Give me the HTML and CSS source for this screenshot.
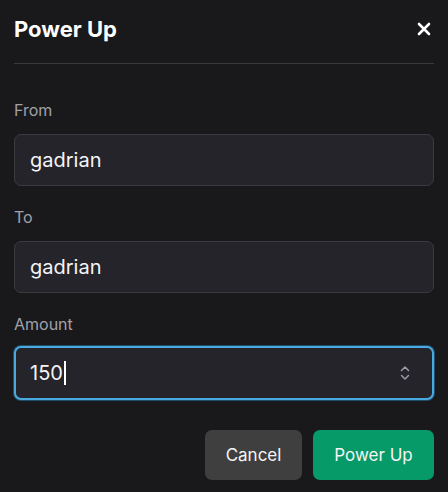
FILE: index.html
```html
<!DOCTYPE html>
<html>
<head>
<meta charset="utf-8">
<link rel="stylesheet" href="styles.css">
</head>
<body>
<div class="dialog">
  <header class="head">
    <h1 class="title">Power Up</h1>
    <button class="close" aria-label="Close">
      <svg width="14" height="14" viewBox="0 0 14 14"><path d="M2 2L12 12M12 2L2 12" stroke="#fff" stroke-width="2.6" stroke-linecap="round"/></svg>
    </button>
  </header>
  <div class="form">
    <div class="field">
      <label class="label">From</label>
      <div class="input">gadrian</div>
    </div>
    <div class="field">
      <label class="label">To</label>
      <div class="input">gadrian</div>
    </div>
    <div class="field">
      <label class="label">Amount</label>
      <div class="input focus"><span class="val">150</span><span class="caret"></span>
        <svg class="spin" width="10" height="16" viewBox="0 0 10 16"><path d="M1.5 5.5L5 2L8.5 5.5M1.5 10.5L5 14L8.5 10.5" fill="none" stroke="#9a9aa3" stroke-width="1.5" stroke-linecap="round" stroke-linejoin="round"/></svg>
      </div>
    </div>
  </div>
  <div class="actions">
    <button class="btn cancel">Cancel</button>
    <button class="btn primary">Power Up</button>
  </div>
</div>
</body>
</html>
```
FILE: styles.css
```css
html, body {
  margin: 0;
  background: #19191c;
}
body {
  font-family: Inter, "Noto Sans", sans-serif;
  color: #f4f4f5;
}
.dialog {
  padding: 0 14px;
}
.head {
  display: flex;
  align-items: center;
  justify-content: space-between;
  padding: 15px 0 20px;
  border-bottom: 1px solid #38383d;
}
.title {
  margin: 0;
  font-size: 22px;
  line-height: 28px;
  font-weight: 700;
  color: #fff;
}
.close {
  background: none;
  border: 0;
  padding: 0;
  margin-right: 3px;
  display: flex;
}
.form {
  padding-top: 34px;
  display: flex;
  flex-direction: column;
  gap: 19px;
}
.field {
  display: flex;
  flex-direction: column;
  gap: 12px;
}
.label {
  font-size: 16px;
  line-height: 24px;
  color: #a1a1aa;
}
.input {
  height: 50px;
  box-sizing: content-box;
  border: 1px solid #3a3a41;
  border-radius: 7px;
  background: #25242b;
  display: flex;
  align-items: center;
  padding: 0 15px;
  font-size: 20px;
  color: #f4f4f5;
}
.input.focus {
  height: 50px;
  border: 2px solid #4aa9de;
  padding: 0 14px;
  box-shadow: 0 0 0 1px #1f4f6b;
  margin-top: -2px;
}
.caret {
  width: 2px;
  height: 24px;
  background: #fff;
  margin-left: 1px;
}
.spin {
  margin-left: auto;
  margin-right: 8px;
}
.actions {
  display: flex;
  justify-content: flex-end;
  gap: 11px;
  padding-top: 30px;
}
.btn {
  font-family: Inter, "Noto Sans", sans-serif;
  font-size: 17px;
  height: 50px;
  border: 0;
  border-radius: 7px;
  color: #f4f4f5;
  padding: 0 20px;
}
.cancel {
  background: #3f3f3f;
  width: 97px;
}
.primary {
  background: #079a69;
  width: 121px;
}
```
